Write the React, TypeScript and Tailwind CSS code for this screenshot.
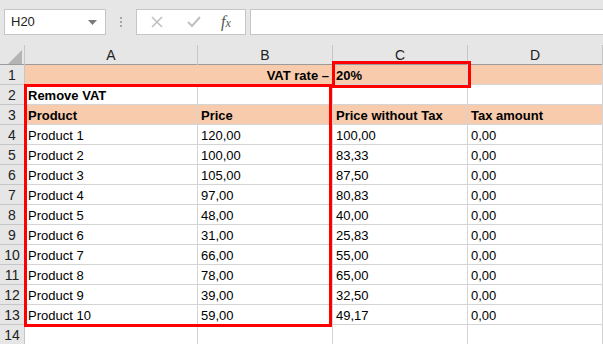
import { ChevronDown } from 'lucide-react'

const rows = [
  ['Product 1', '120,00', '100,00', '0,00'],
  ['Product 2', '100,00', '83,33', '0,00'],
  ['Product 3', '105,00', '87,50', '0,00'],
  ['Product 4', '97,00', '80,83', '0,00'],
  ['Product 5', '48,00', '40,00', '0,00'],
  ['Product 6', '31,00', '25,83', '0,00'],
  ['Product 7', '66,00', '55,00', '0,00'],
  ['Product 8', '78,00', '65,00', '0,00'],
  ['Product 9', '39,00', '32,50', '0,00'],
  ['Product 10', '59,00', '49,17', '0,00']
]

const cols = 'grid grid-cols-[25px_173px_135px_135px_1fr]'
const cell =
  'h-5 border-r border-b border-[#d4d4d4] px-[3px] leading-[21px] whitespace-nowrap overflow-hidden'
const rowHead =
  'h-5 border-r border-b border-[#c6c6c6] bg-[#e6e6e6] text-center text-[14px] leading-[20px] text-[#222]'

export default function App() {
  return (
    <div
      className="relative w-[603px] h-[344px] overflow-hidden bg-white text-[13px] text-black"
      style={{ fontFamily: '"Liberation Sans", Arial, sans-serif' }}
    >
      {/* formula bar */}
      <div className="h-[45px] bg-[#e6e6e6] flex items-start pt-[9px] pl-1">
        <div className="w-[102px] h-[26px] bg-white border border-[#c6c6c6] flex items-center justify-between pl-[6px] pr-2">
          <span className="text-[13px] text-[#222]">H20</span>
          <svg width="9" height="5" viewBox="0 0 9 5">
            <path d="M0 0h9L4.5 5z" fill="#7a7a7a" />
          </svg>
        </div>
        <div className="w-[30px] h-[26px] flex flex-col items-center justify-center gap-[2px]">
          <span className="w-[2px] h-[2px] bg-[#a6a6a6]" />
          <span className="w-[2px] h-[2px] bg-[#a6a6a6]" />
          <span className="w-[2px] h-[2px] bg-[#a6a6a6]" />
        </div>
        <div className="w-[110px] h-[26px] bg-white border border-[#c6c6c6] flex items-center">
          <svg width="12" height="12" viewBox="0 0 12 12" className="ml-[14px]">
            <path d="M1 1l10 10M11 1L1 11" stroke="#c0c0c0" strokeWidth="1.6" />
          </svg>
          <svg width="14" height="12" viewBox="0 0 14 12" className="ml-[24px]">
            <path d="M1 6l4 4 8-9" stroke="#c0c0c0" strokeWidth="2" fill="none" />
          </svg>
          <span
            className="ml-[20px] italic text-[16px] text-[#555]"
            style={{ fontFamily: '"Liberation Serif", serif' }}
          >
            f<span className="text-[12px]">x</span>
          </span>
        </div>
        <div className="ml-1 flex-1 h-[26px] bg-white border border-[#c6c6c6] border-r-0" />
      </div>

      {/* column header */}
      <div className={`${cols} h-5 bg-[#e6e6e6] border-b border-[#9b9b9b] text-[14px] text-[#222]`}>
        <div className="border-r border-[#c6c6c6] flex items-end justify-end pr-[2px] pb-[1px]">
          <svg width="14" height="14" viewBox="0 0 14 14">
            <path d="M14 0v14H0z" fill="#b4b4b4" />
          </svg>
        </div>
        {['A', 'B', 'C', 'D'].map((c) => (
          <div key={c} className="border-r border-[#c6c6c6] text-center leading-[20px]">
            {c}
          </div>
        ))}
      </div>

      {/* row 1 */}
      <div className={`${cols} font-bold`}>
        <div className={`${rowHead} font-normal`}>1</div>
        <div className={`${cell} col-span-2 bg-[#f8cbad] text-right`}>VAT rate –</div>
        <div className={`${cell} bg-[#f8cbad]`}>20%</div>
        <div className={`${cell} bg-[#f8cbad]`} />
      </div>
      {/* row 2 */}
      <div className={cols}>
        <div className={rowHead}>2</div>
        <div className={`${cell} font-bold`}>Remove VAT</div>
        <div className={cell} />
        <div className={cell} />
        <div className={cell} />
      </div>
      {/* row 3 */}
      <div className={`${cols} font-bold`}>
        <div className={`${rowHead} font-normal`}>3</div>
        <div className={`${cell} bg-[#f8cbad]`}>Product</div>
        <div className={`${cell} bg-[#f8cbad]`}>Price</div>
        <div className={`${cell} bg-[#f8cbad]`}>Price without Tax</div>
        <div className={`${cell} bg-[#f8cbad]`}>Tax amount</div>
      </div>
      {rows.map((r, i) => (
        <div key={i} className={cols}>
          <div className={rowHead}>{i + 4}</div>
          {r.map((v, j) => (
            <div key={j} className={cell}>
              {v}
            </div>
          ))}
        </div>
      ))}
      <div className={cols}>
        <div className={rowHead}>14</div>
        <div className={cell} />
        <div className={cell} />
        <div className={cell} />
        <div className={cell} />
      </div>

      {/* highlight boxes */}
      <div className="absolute left-[332px] top-[61px] w-[139px] h-[27px] border-[3px] border-[#ff0000]" />
      <div className="absolute left-[24px] top-[84px] w-[308px] h-[243px] border-[3px] border-[#ff0000]" />
    </div>
  )
}
